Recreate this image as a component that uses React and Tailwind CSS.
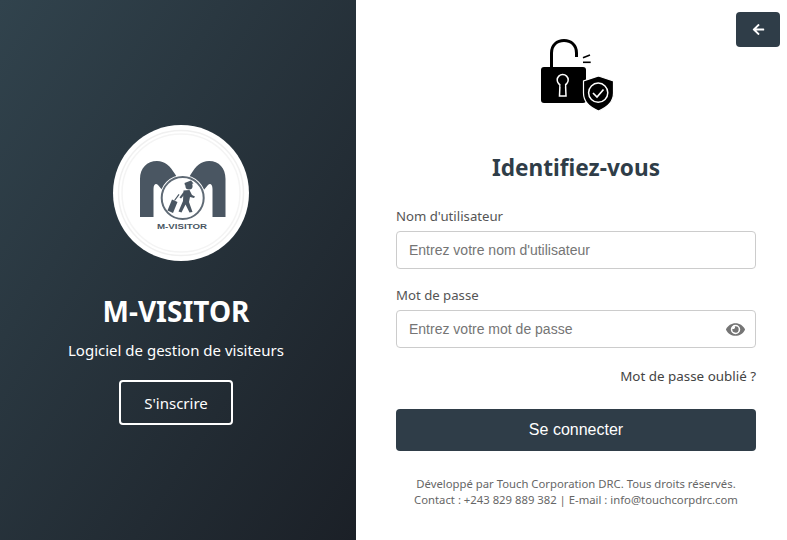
import React from "react";
import { FaEye, FaArrowLeft } from "react-icons/fa";

const ui = { fontFamily: '"Noto Sans", "Open Sans", sans-serif' };
const arial = { fontFamily: '"Liberation Sans", Arial, sans-serif' };

function Logo() {
  return (
    <div className="w-[136px] h-[136px] ml-[10px] rounded-full bg-white flex items-center justify-center">
      <svg width="136" height="136" viewBox="0 0 136 136">
        <circle cx="68" cy="68" r="62.5" fill="none" stroke="#f0f0f0" strokeWidth="1.5" />
        <circle cx="68" cy="68" r="59" fill="none" stroke="#f4f4f4" strokeWidth="1.5" />
        <path d="M27 92 V54 C27 43 34 36 44 36 C52 36 57 41 62 49 L70 62 L78 49 C83 41 88 36 96 36 C106 36 112.5 43 112.5 54 V92 H99.5 V64 C99.5 59 97 58 95 60 L70 90 L45 60 C43 58 40.5 59 40.5 64 V92 Z" fill="#4a5662" />
        <circle cx="69.7" cy="73" r="23" fill="#fff" />
        <circle cx="69.7" cy="73" r="21" fill="#fff" stroke="#5f6a75" strokeWidth="2" />
        <circle cx="76" cy="61" r="3.6" fill="#4a5662" />
        <path d="M71.5 58 L78 55.5 L80.5 58.5 L72 60.5 Z" fill="#4a5662" />
        <path d="M70.5 65.5 L76.5 65 L79 70 L82 71.5 L81 73 L77 72 L76 77 L79.5 87 L76.5 87.5 L72.5 79.5 L68.5 87.5 L65.5 86.5 L70 76 Z" fill="#4a5662" />
        <path d="M70.5 67 L66.5 72.5 L68 73.5 L72 69 Z" fill="#4a5662" />
        <path d="M59 74.5 L64.5 77 L60 88 L54.5 85.5 Z" fill="#4a5662" />
        <path d="M61.5 75.5 L66 69.3" stroke="#4a5662" strokeWidth="1.2" />
        <text x="69" y="103.5" textAnchor="middle" fontSize="7.5" fontWeight="700" fill="#4a5662" fontFamily="Liberation Sans, sans-serif" textLength="50" lengthAdjust="spacingAndGlyphs">M-VISITOR</text>
      </svg>
    </div>
  );
}

function LockIcon() {
  return (
    <svg width="76" height="74" viewBox="0 0 76 74">
      <path d="M13.5 29 V15 C13.5 7 19 2.5 26 2.5 C33 2.5 38.5 7 38.5 15 V19" fill="none" stroke="#000" strokeWidth="3" />
      <rect x="3" y="29" width="45" height="36" rx="3" fill="#000" />
      <circle cx="24.7" cy="42" r="5.5" fill="#000" stroke="#fff" strokeWidth="1.5" />
      <path d="M22 46 L21.5 58 H28 L27.5 46" fill="#000" stroke="#fff" strokeWidth="1.5" />
      <rect x="22.7" y="44" width="4" height="5" fill="#000" />
      <path d="M45 19.7 L52 17" stroke="#000" strokeWidth="1.6" />
      <path d="M45 24.3 H52.7" stroke="#000" strokeWidth="1.6" />
      <path d="M60.5 38 L75.5 43 V55 C75.5 64 69 69.5 60.5 73 C52 69.5 45.5 64 45.5 55 V43 Z" fill="#000" stroke="#fff" strokeWidth="1.2" />
      <circle cx="60.2" cy="54.7" r="9.6" fill="none" stroke="#fff" strokeWidth="1.5" />
      <path d="M55 55 L59 59 L65.5 51.5" fill="none" stroke="#fff" strokeWidth="1.7" />
    </svg>
  );
}

export default function App() {
  return (
    <div className="flex w-[787px] h-[540px] overflow-hidden bg-white" style={ui}>
      <aside className="w-[356px] h-full shrink-0 flex flex-col items-center pt-[125px] pr-[4px] bg-[linear-gradient(to_bottom_right,#31434d,#1b2027)] text-white">
        <Logo />
        <h1 className="mt-[30px] text-[28px] leading-[40px] font-bold">M-VISITOR</h1>
        <p className="mt-[8px] text-[15px] leading-[22px]">Logiciel de gestion de visiteurs</p>
        <button className="mt-[19px] w-[114px] h-[45px] pt-[1px] border-2 border-white rounded-[4px] text-[15px]">S'inscrire</button>
      </aside>
      <main className="relative flex-1 h-full flex flex-col items-center pl-[40px] pr-[31px]">
        <button className="absolute top-[12px] right-[7px] w-[44px] h-[35px] rounded-[4px] bg-[#2f3d48] flex items-center justify-center">
          <FaArrowLeft className="text-white w-[13px] h-[13px]" />
        </button>
        <div className="mt-[38px] h-[74px]"><LockIcon /></div>
        <h2 className="mt-[40px] text-[22.6px] leading-[32px] font-bold text-[#2f3d48]">Identifiez-vous</h2>
        <form className="w-full mt-[22px] flex flex-col">
          <label className="text-[13.2px] leading-[20px] text-[#555]">Nom d'utilisateur</label>
          <input readOnly placeholder="Entrez votre nom d'utilisateur" className="mt-[5px] h-[38px] w-full px-3 border border-[#ccc] rounded-[4px] text-[14px] placeholder:text-[#757575]" style={arial} />
          <label className="mt-[16px] text-[13.2px] leading-[20px] text-[#555]">Mot de passe</label>
          <div className="relative mt-[5px]">
            <input readOnly placeholder="Entrez votre mot de passe" className="h-[38px] w-full px-3 border border-[#ccc] rounded-[4px] text-[14px] placeholder:text-[#757575]" style={arial} />
            <FaEye className="absolute right-[11px] top-[11px] w-[19px] h-[17px] text-[#757575]" />
          </div>
          <a className="mt-[18px] self-end text-[13.4px] leading-[20px] text-[#444]">Mot de passe oublié ?</a>
          <button type="button" className="mt-[23px] h-[42px] w-full rounded-[4px] bg-[#2f3d48] text-white text-[16px]" style={arial}>Se connecter</button>
        </form>
        <footer className="mt-[25px] text-center text-[11.3px] leading-[16px] text-[#666]">
          <p>Développé par Touch Corporation DRC. Tous droits réservés.</p>
          <p>Contact : +243 829 889 382 | E-mail : info@touchcorpdrc.com</p>
        </footer>
      </main>
    </div>
  );
}
